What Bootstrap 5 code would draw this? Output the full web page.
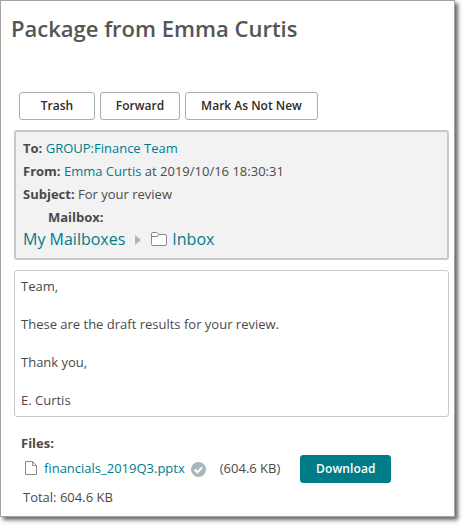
<!DOCTYPE html>
<html lang="en">
<head>
<meta charset="utf-8">
<title>Package from Emma Curtis</title>
<link href="https://cdn.jsdelivr.net/npm/bootstrap@5.3.0/dist/css/bootstrap.min.css" rel="stylesheet">
<style>
body{font-family:"Open Sans","Noto Sans",sans-serif;font-size:13px;line-height:19px;color:#4a4a4a;background:#fff;white-space:nowrap;min-height:526px}
a{color:#007c89;text-decoration:none}
b{font-weight:700}
.window{width:455px;height:517px;border:1px solid #a8a3a1;box-shadow:3px 3px 4px rgba(0,0,0,.6);padding:0 5px 0 13px}
.title{font-size:22px;line-height:32px;font-weight:600;margin:0 0 0 -3px;padding:11px 0 48px;color:#555}
.actions{gap:5px;padding-left:5px}
.btn{--bs-btn-font-size:12px;--bs-btn-line-height:18px;height:28px;padding:4px 0;--bs-btn-border-radius:3px;font-weight:600}
.btn-plain{--bs-btn-border-color:#a3b1b5;--bs-btn-color:#302a26;background:#fff}
.w-trash{width:76px}.w-forward{width:80px}.w-mark{width:133px}
.details{margin-top:10px;height:130px;border:2px solid #c9c9c9;border-radius:3px;background:#f2f2f2;padding:5px 7px;line-height:23px}
.mailbox{padding-left:25px}
.path{font-size:16px;line-height:21px}
.arrow{margin:0 9px 0 10px}
.folder{margin-right:4px}
.message{margin-top:10px;height:147px;border:1px solid #c9c9c9;border-radius:3px;padding:6px}
.files{padding:17px 0 0 7px}
.filerow{padding-left:4px}
.doc{margin-right:7px}
.check{margin:3px 14px 0 6px}
.download{width:91px;--bs-btn-bg:#007c89;--bs-btn-color:#fff;--bs-btn-border-color:#007c89;font-weight:600;letter-spacing:.1px;margin:2px 0 0 20px}
.total{padding:5px 0 0 2px}
</style>
<script src="https://cdn.jsdelivr.net/npm/bootstrap@5.3.0/dist/js/bootstrap.bundle.min.js"></script>
</head>
<body>
<main class="window bg-white">
  <h1 class="title">Package from Emma Curtis</h1>
  <div class="actions d-flex">
    <button class="btn btn-plain w-trash">Trash</button>
    <button class="btn btn-plain w-forward">Forward</button>
    <button class="btn btn-plain w-mark">Mark As Not New</button>
  </div>
  <section class="details">
    <div><b>To:</b> <a href="#">GROUP:Finance Team</a></div>
    <div><b>From:</b> <a href="#">Emma Curtis</a> at 2019/10/16 18:30:31</div>
    <div><b>Subject:</b> For your review</div>
    <div class="mailbox"><b>Mailbox:</b></div>
    <div class="path d-flex align-items-center">
      <a href="#">My Mailboxes</a>
      <svg class="arrow" width="7" height="10" viewBox="0 0 7 10"><path d="M0 0L6 5L0 10Z" fill="#a9b6bd"/></svg>
      <svg class="folder" width="17" height="15" viewBox="0 0 17 15" fill="none" stroke="#858b8e"><path d="M.5 11.5V2Q.5.5 2 .5H5.500Q6.500.5 7 1.500L7.500 2.500H14Q15.500 2.500 15.500 4V12Q15.500 13.500 14 13.500H2Q.5 13.500.5 12ZM.5 5.500Q.5 4.500 2 4.500H6.500L7.500 2.500" fill="#fff"/></svg>
      <a href="#">Inbox</a>
    </div>
  </section>
  <section class="message">
    <div>Team,</div><br>
    <div>These are the draft results for your review.</div><br>
    <div>Thank you,</div><br>
    <div>E. Curtis</div>
  </section>
  <section class="files">
    <div><b>Files:</b></div>
    <div class="filerow d-flex align-items-center">
      <svg class="doc" width="12" height="14" viewBox="0 0 12 14" fill="none" stroke="#858b8e"><path d="M.5.5H7.500L11.500 4.500V13.500H.5ZM7.500.5V4.500H11.500"/></svg>
      <a href="#">financials_2019Q3.pptx</a>
      <svg class="check" width="15" height="15" viewBox="0 0 14 14"><circle cx="7" cy="7" r="7" fill="#a9b6bd"/><path d="M3.500 7L6 9.500L10.500 5" fill="none" stroke="#fff" stroke-width="2"/></svg>
      <span>(604.6 KB)</span>
      <button class="btn download">Download</button>
    </div>
    <div class="total">Total: 604.6 KB</div>
  </section>
</main>
</body>
</html>
